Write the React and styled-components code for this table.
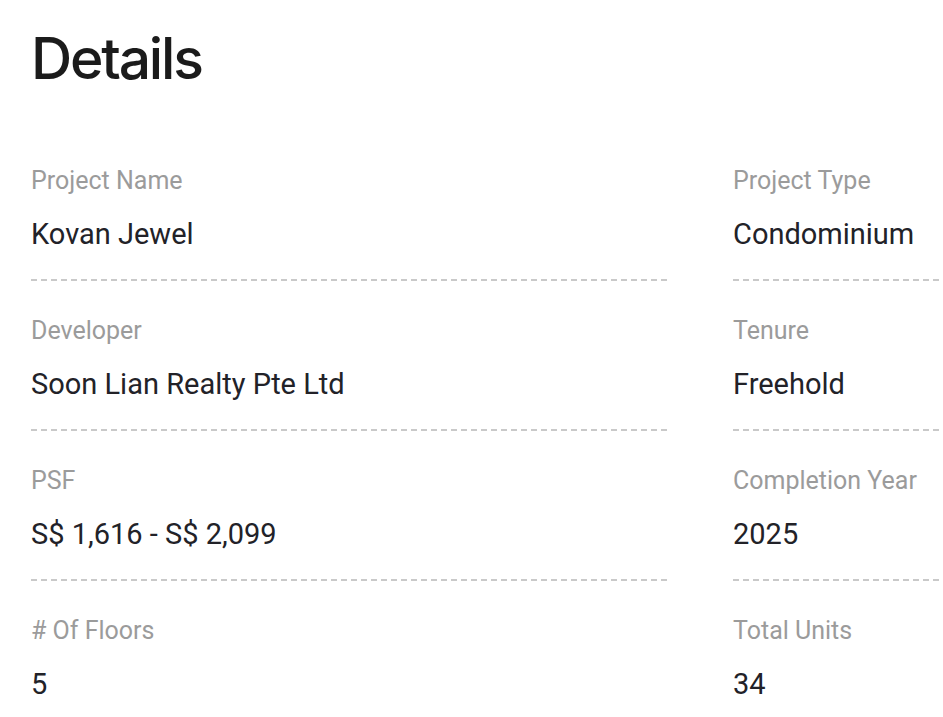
import styled, { createGlobalStyle } from "styled-components"

const GlobalStyle = createGlobalStyle`
    html, body {
        margin : 0;
        padding : 0;
        background-color : #ffffff;
        overflow : hidden;
    }
`

const Container = styled.div`
    padding : 30px 0 0 31px;
    width : 1400px;
    font-family : Roboto, "Liberation Sans", sans-serif;
`

const Title = styled.h1`
    margin : 0 0 78px 0;
    font-family : Inter, "Open Sans", sans-serif;
    font-size : 57px;
    line-height : 58px;
    font-weight : 500;
    letter-spacing : -2.2px;
    color : #1b1b1b;
`

const Grid = styled.div`
    display : grid;
    grid-template-columns : 639px 639px;
    column-gap : 63px;
`

const Field = styled.div`
    display : flex;
    flex-direction : column;
    margin-bottom : 35px;
`

const Label = styled.div`
    font-size : 25px;
    line-height : 30px;
    color : #9b9b9b;
`

const Value = styled.div`
    margin-top : 20px;
    font-size : 29px;
    line-height : 36px;
    color : #222228;
`

const Divider = styled.div`
    margin-top : 27px;
    height : 2px;
    background-image : repeating-linear-gradient(
        to right,
        #c9c9c9 0px,
        #c9c9c9 6px,
        transparent 6px,
        transparent 10px
    );
`

const fields = [
    ["Project Name", "Kovan Jewel"],
    ["Project Type", "Condominium"],
    ["Developer", "Soon Lian Realty Pte Ltd"],
    ["Tenure", "Freehold"],
    ["PSF", "S$ 1,616 - S$ 2,099"],
    ["Completion Year", "2025"],
    ["# Of Floors", "5"],
    ["Total Units", "34"],
]

const App = () => {
    return (
        <Container>
            <GlobalStyle />
            <Title>Details</Title>
            <Grid>
                {fields.map(([label, value]) => (
                    <Field key={label}>
                        <Label>{label}</Label>
                        <Value>{value}</Value>
                        <Divider />
                    </Field>
                ))}
            </Grid>
        </Container>
    )
}

export default App
